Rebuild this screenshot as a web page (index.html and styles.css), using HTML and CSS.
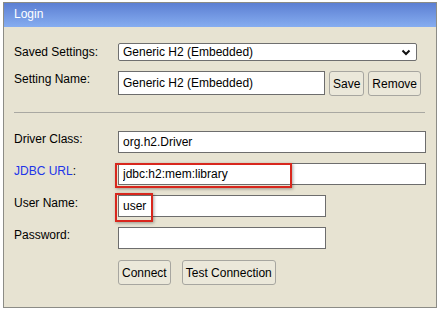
FILE: index.html
```html
<!DOCTYPE html>
<html>
<head>
<meta charset="utf-8">
<link rel="stylesheet" href="styles.css">
</head>
<body>
<div class="panel">
  <div class="head">Login</div>
  <div class="body">
    <div class="row r1">
      <label class="lbl">Saved Settings:</label>
      <div class="sel-wrap">
        <select class="sel"><option>Generic H2 (Embedded)</option></select>
        <svg class="chev" width="10" height="7" viewBox="0 0 10 7"><path d="M1.5 1.5 L5 5 L8.5 1.5" fill="none" stroke="#111" stroke-width="2"/></svg>
      </div>
    </div>
    <div class="row r2">
      <label class="lbl">Setting Name:</label>
      <input class="inp name tall" value="Generic H2 (Embedded)">
      <button class="btn">Save</button>
      <button class="btn">Remove</button>
    </div>
    <div class="sep"></div>
    <div class="row r3">
      <label class="lbl">Driver Class:</label>
      <input class="inp long" value="org.h2.Driver">
    </div>
    <div class="row r4">
      <label class="lbl"><span class="link">JDBC URL</span>:</label>
      <div class="field">
        <input class="inp long" value="jdbc:h2:mem:library">
        <span class="mark mark-url"></span>
      </div>
    </div>
    <div class="row r5">
      <label class="lbl">User Name:</label>
      <div class="field">
        <input class="inp short" value="user">
        <span class="mark mark-user"></span>
      </div>
    </div>
    <div class="row r6">
      <label class="lbl">Password:</label>
      <input class="inp short" type="password" value="">
    </div>
    <div class="row r7">
      <span class="lbl"></span>
      <button class="btn">Connect</button>
      <button class="btn gap">Test Connection</button>
    </div>
  </div>
</div>
</body>
</html>
```
FILE: styles.css
```css
html, body {
  margin: 0;
  padding: 0;
  background: #ffffff;
}
body {
  font-family: "Liberation Sans", Arial, sans-serif;
  font-size: 12px;
  color: #000;
}
.panel {
  margin: 2px 2px 2px 3px;
  height: 306px;
  border: 1px solid #8c8c86;
  background: #e7e3d2;
  box-sizing: border-box;
  display: flex;
  flex-direction: column;
}
.head {
  height: 24px;
  line-height: 22px;
  padding-left: 10px;
  color: #ffffff;
  font-size: 12px;
  background: linear-gradient(#5c7fd3, #86adf0);
}
.body {
  padding: 0 10px;
  display: flex;
  flex-direction: column;
}
.row {
  display: flex;
  align-items: flex-start;
}
.lbl {
  width: 104px;
  flex: none;
  line-height: 14px;
  padding-top: 1px;
}
.r1 { margin-top: 16px; }
.r1 .lbl { padding-top: 2px; }
.r2 { margin-top: 10px; }
.r3 { margin-top: 18px; }
.r4, .r5, .r6 { margin-top: 10px; }
.r7 { margin-top: 11px; }
.link { color: #2035e8; }
.sel-wrap {
  position: relative;
}
.sel {
  -webkit-appearance: none;
  appearance: none;
  width: 299px;
  height: 18px;
  margin: 0;
  padding: 0 4px;
  border: 1px solid #6f6f6f;
  border-radius: 2px;
  background: #ffffff;
  font-family: "Liberation Sans", Arial, sans-serif;
  font-size: 12px;
  color: #000;
  box-sizing: border-box;
}
.chev {
  position: absolute;
  right: 6px;
  top: 6px;
}
.inp {
  height: 22px;
  margin: 0;
  padding: 0 4px;
  border: 1px solid #6d6d6d;
  border-radius: 0;
  background: #ffffff;
  font-family: "Liberation Sans", Arial, sans-serif;
  font-size: 12px;
  color: #000;
  box-sizing: border-box;
  outline: none;
}
.inp.tall { height: 24px; }
.inp.name { width: 207px; }
.inp.short { width: 208px; }
.inp.long { width: 308px; }
.btn {
  height: 25px;
  margin: 0 0 0 4px;
  padding: 0 3px;
  border: 1px solid #a7a6a0;
  border-radius: 3px;
  background: #ebe8da;
  font-family: "Liberation Sans", Arial, sans-serif;
  font-size: 12px;
  color: #000;
  box-sizing: border-box;
}
.r7 .btn:first-of-type { margin-left: 0; }
.btn.gap { margin-left: 11px; }
.sep {
  margin-top: 16px;
  height: 1px;
  width: 411px;
  background: #a9a8a2;
}
.field {
  position: relative;
  height: 22px;
}
.mark {
  position: absolute;
  border: 2px solid #d8271d;
  box-shadow: 1px 1px 3px rgba(0,0,0,0.35);
  pointer-events: none;
}
.mark-url {
  left: -3px;
  top: 0;
  width: 173px;
  height: 21px;
}
.mark-user {
  left: -3px;
  top: -2px;
  width: 34px;
  height: 25px;
}
```
